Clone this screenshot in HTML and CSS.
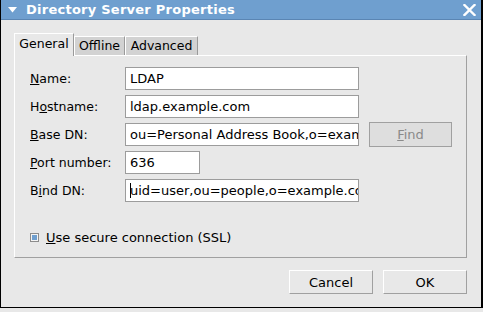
FILE: index.html
```html
<!DOCTYPE html>
<html lang="en">
<head>
    <meta charset="UTF-8">
    <title>Directory Server Properties</title>
    <link rel="stylesheet" href="styles.css">
</head>
<body>
    <main class="window">
        <header class="titlebar">
            <svg class="menuArrow" width="9" height="6" viewBox="0 0 9 6"><polygon points="0,0 9,0 4.5,5.5" fill="#fff"/></svg>
            <p class="titleText">Directory Server Properties</p>
            <svg class="closeBtn" width="13" height="12" viewBox="0 0 13 12"><path d="M1.5 1 L11.5 11 M11.5 1 L1.5 11" stroke="#fff" stroke-width="2.4" stroke-linecap="square"/></svg>
        </header>
        <section class="content">
            <div class="tabs">
                <div class="tab tabActive tabGeneral">General</div>
                <div class="tab tabOffline">Offline</div>
                <div class="tab tabAdvanced">Advanced</div>
            </div>
            <div class="panel">
                <div class="formRow">
                    <label class="formLabel"><u>N</u>ame:</label>
                    <div class="field">LDAP</div>
                </div>
                <div class="formRow">
                    <label class="formLabel">H<u>o</u>stname:</label>
                    <div class="field">ldap.example.com</div>
                </div>
                <div class="formRow">
                    <label class="formLabel"><u>B</u>ase DN:</label>
                    <div class="field">ou=Personal Address Book,o=example.com</div>
                    <button class="findBtn" disabled><u>F</u>ind</button>
                </div>
                <div class="formRow">
                    <label class="formLabel"><u>P</u>ort number:</label>
                    <div class="field fieldShort">636</div>
                </div>
                <div class="formRow">
                    <label class="formLabel">B<u>i</u>nd DN:</label>
                    <div class="field"><span class="caret"></span>uid=user,ou=people,o=example.com</div>
                </div>
                <label class="checkRow">
                    <span class="checkBox"><span class="checkMark"></span></span>
                    <span><u>U</u>se secure connection (SSL)</span>
                </label>
            </div>
            <div class="buttonRow">
                <button class="dlgBtn">Cancel</button>
                <button class="dlgBtn">OK</button>
            </div>
        </section>
    </main>
</body>
</html>
```

FILE: styles.css
```css
*{
    margin: 0; padding: 0;
    box-sizing: border-box;
}
html, body{
    width: 483px;
    height: 312px;
    overflow: hidden;
    background-color: #e8e8e8;
    font-family: "DejaVu Sans", "Liberation Sans", sans-serif;
    font-size: 13px;
    color: #000;
}
.window{
    width: 483px;
    height: 308px;
    border-left: 1px solid #000;
    border-right: 2px solid #000;
    border-bottom: 1px solid #000;
    background-color: #e8e8e8;
    display: flex;
    flex-direction: column;
}
.titlebar{
    height: 20px;
    background-color: #6f9fcf;
    border-bottom: 1px solid #5a85b3;
    display: flex;
    align-items: center;
    padding-left: 7px;
    padding-right: 5px;
}
.menuArrow{
    flex: none;
    margin-top: 1px;
}
.titleText{
    margin-left: 9px;
    flex: 1;
    color: #fff;
    font-weight: bold;
    font-size: 13px;
    letter-spacing: 0.25px;
    line-height: 20px;
}
.closeBtn{
    flex: none;
}
.content{
    flex: 1;
    padding: 13px 14px 0 13px;
    display: flex;
    flex-direction: column;
}
.tabs{
    display: flex;
    align-items: flex-end;
    height: 22px;
    position: relative;
    z-index: 1;
}
.tab{
    height: 19px;
    background-color: #d2d2d2;
    border-top: 1px solid #fff;
    border-left: 1px solid #fff;
    border-right: 1px solid #9a9a9a;
    line-height: 18px;
    font-size: 12.5px;
    text-align: center;
    white-space: nowrap;
}
.tabGeneral{
    width: 60px;
}
.tabOffline{
    width: 51px;
}
.tabAdvanced{
    width: 73px;
}
.tabActive{
    height: 23px;
    margin-bottom: -1px;
    background-color: #e8e8e8;
    line-height: 20px;
}
.panel{
    height: 203px;
    border-top: 1px solid #fff;
    border-left: 1px solid #fff;
    border-right: 1px solid #a0a0a0;
    border-bottom: 1px solid #a0a0a0;
    padding: 11px 0 0 15px;
    display: flex;
    flex-direction: column;
    gap: 5px;
}
.formRow{
    display: flex;
    align-items: center;
    height: 23px;
}
.formLabel{
    width: 95px;
    flex: none;
    font-size: 12.5px;
}
.field{
    width: 234px;
    height: 23px;
    border: 1px solid #9c9c9c;
    background-color: #fff;
    padding-left: 4px;
    line-height: 21px;
    white-space: nowrap;
    overflow: hidden;
    position: relative;
}
.fieldShort{
    width: 75px;
}
.caret{
    position: absolute;
    left: 4px;
    top: 3px;
    width: 1px;
    height: 15px;
    background-color: #000;
}
.findBtn{
    margin-left: 10px;
    width: 83px;
    height: 25px;
    border: 1px solid #a0a0a0;
    background-color: #dedede;
    color: #8a8a8a;
    font-family: inherit;
    font-size: 13px;
}
.checkRow{
    display: flex;
    align-items: center;
    margin-top: 23px;
    gap: 7px;
}
.checkBox{
    width: 9px;
    height: 9px;
    border: 1px solid #8c8c8c;
    background-color: #f4f4f4;
    padding: 1px;
    display: block;
}
.checkMark{
    display: block;
    width: 5px;
    height: 5px;
    background-color: #6f9fcf;
}
.buttonRow{
    display: flex;
    justify-content: flex-end;
    gap: 10px;
    margin-top: 12px;
}
.dlgBtn{
    width: 84px;
    height: 24px;
    background-color: #e8e8e8;
    border-top: 1px solid #fff;
    border-left: 1px solid #fff;
    border-right: 1px solid #a0a0a0;
    border-bottom: 1px solid #a0a0a0;
    font-family: inherit;
    font-size: 13px;
    color: #000;
}
```
